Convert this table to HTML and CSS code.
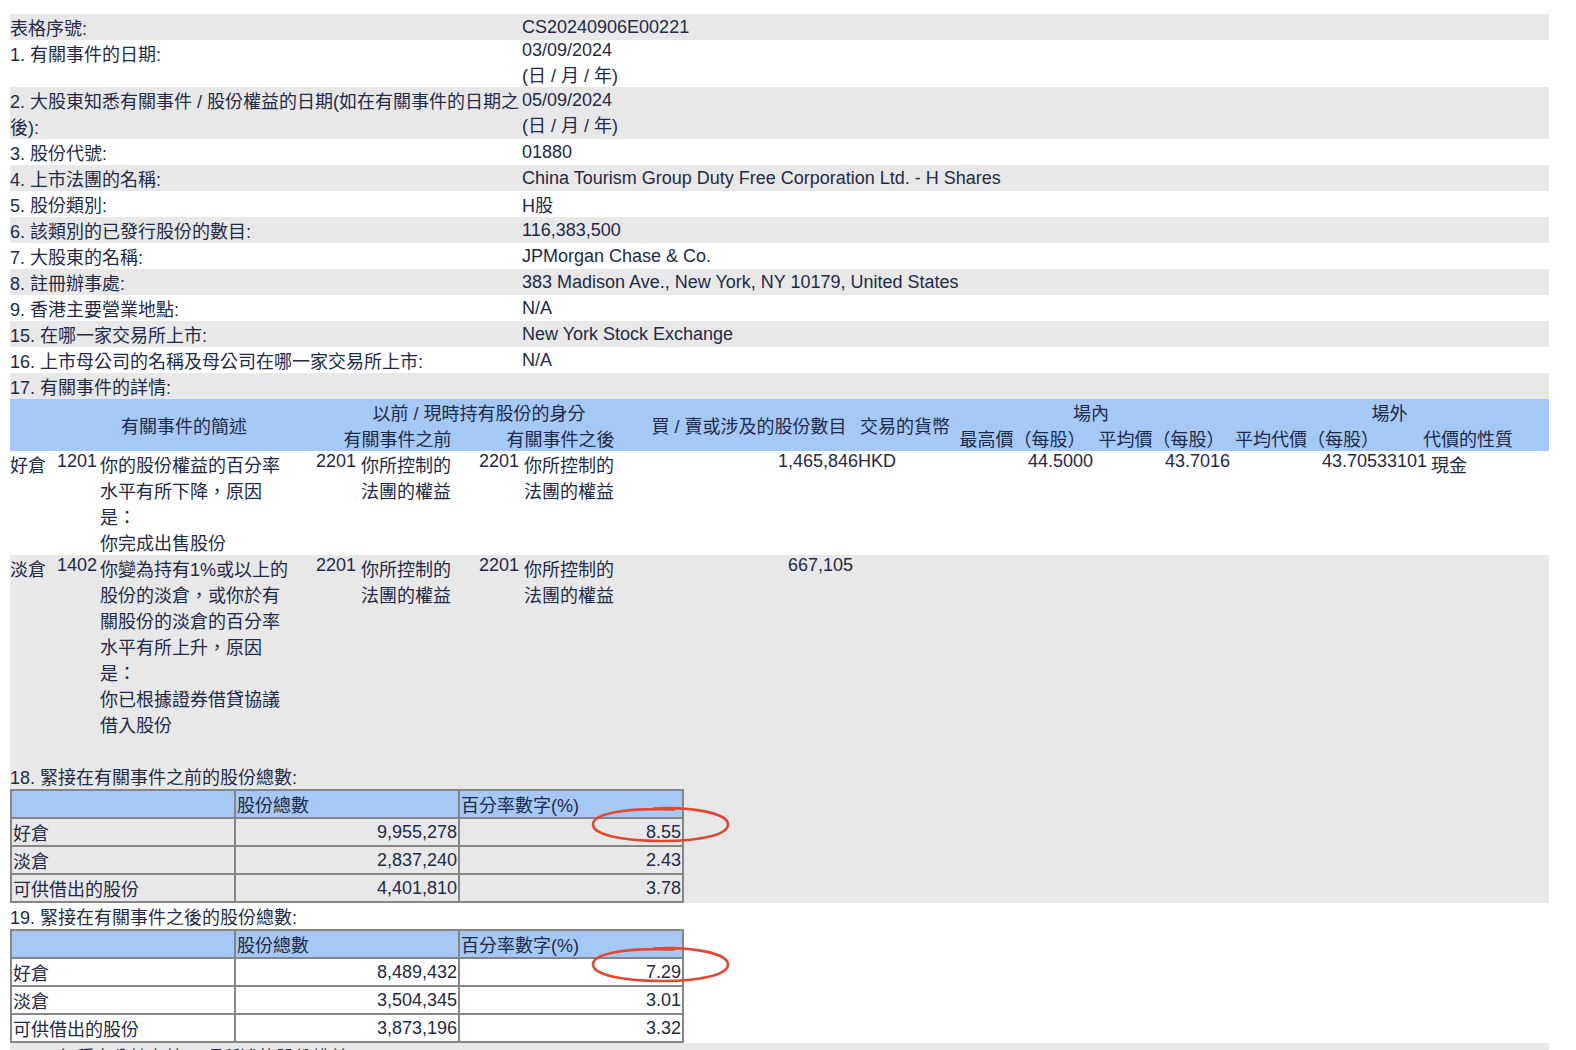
FILE: index.html
```html
<!DOCTYPE html>
<html lang="zh-Hant">
<head>
<meta charset="utf-8">
<title>權益披露</title>
<link rel="stylesheet" href="styles.css">
</head>
<body>
<div class="form">
  <div class="row gray"><div class="lbl">表格序號:</div><div class="val">CS20240906E00221</div></div>
  <div class="row"><div class="lbl">1. 有關事件的日期:</div><div class="val">03/09/2024<br>(日 / 月 / 年)</div></div>
  <div class="row gray"><div class="lbl nowrap">2. 大股東知悉有關事件 / 股份權益的日期(如在有關事件的日期之<br>後):</div><div class="val">05/09/2024<br>(日 / 月 / 年)</div></div>
  <div class="row"><div class="lbl">3. 股份代號:</div><div class="val">01880</div></div>
  <div class="row gray"><div class="lbl">4. 上市法團的名稱:</div><div class="val">China Tourism Group Duty Free Corporation Ltd. - H Shares</div></div>
  <div class="row"><div class="lbl">5. 股份類別:</div><div class="val">H股</div></div>
  <div class="row gray"><div class="lbl">6. 該類別的已發行股份的數目:</div><div class="val">116,383,500</div></div>
  <div class="row"><div class="lbl">7. 大股東的名稱:</div><div class="val">JPMorgan Chase &amp; Co.</div></div>
  <div class="row gray"><div class="lbl">8. 註冊辦事處:</div><div class="val">383 Madison Ave., New York, NY 10179, United States</div></div>
  <div class="row"><div class="lbl">9. 香港主要營業地點:</div><div class="val">N/A</div></div>
  <div class="row gray"><div class="lbl">15. 在哪一家交易所上市:</div><div class="val">New York Stock Exchange</div></div>
  <div class="row"><div class="lbl">16. 上市母公司的名稱及母公司在哪一家交易所上市:</div><div class="val">N/A</div></div>
  <div class="row gray"><div class="lbl">17. 有關事件的詳情:</div></div>

  <div class="dhead">
    <div class="h-desc">有關事件的簡述</div>
    <div class="h-cap">以前 / 現時持有股份的身分</div>
    <div class="h-before">有關事件之前</div>
    <div class="h-after">有關事件之後</div>
    <div class="h-shares">買 / 賣或涉及的股份數目</div>
    <div class="h-cur">交易的貨幣</div>
    <div class="h-on">場內</div>
    <div class="h-high">最高價（每股）</div>
    <div class="h-avg">平均價（每股）</div>
    <div class="h-off">場外</div>
    <div class="h-avgc">平均代價（每股）</div>
    <div class="h-nat">代價的性質</div>
  </div>

  <div class="drow">
    <div>好倉</div>
    <div class="c-code">1201</div>
    <div class="c-desc">你的股份權益的百分率<br>水平有所下降，原因<br>是：<br>你完成出售股份</div>
    <div class="c-code">2201</div>
    <div class="c-text">你所控制的<br>法團的權益</div>
    <div class="c-code">2201</div>
    <div class="c-text">你所控制的<br>法團的權益</div>
    <div class="c-num">1,465,846</div>
    <div>HKD</div>
    <div class="c-num">44.5000</div>
    <div class="c-num">43.7016</div>
    <div class="c-num">43.70533101</div>
    <div class="c-nat">現金</div>
  </div>

  <div class="drow gray tall">
    <div>淡倉</div>
    <div class="c-code">1402</div>
    <div class="c-desc">你變為持有1%或以上的<br>股份的淡倉，或你於有<br>關股份的淡倉的百分率<br>水平有所上升，原因<br>是：<br>你已根據證券借貸協議<br>借入股份</div>
    <div class="c-code">2201</div>
    <div class="c-text">你所控制的<br>法團的權益</div>
    <div class="c-code">2201</div>
    <div class="c-text">你所控制的<br>法團的權益</div>
    <div class="c-num c-short">667,105</div>
  </div>

  <div class="sec gray">
    <div class="sec-title">18. 緊接在有關事件之前的股份總數:</div>
    <table class="tot">
      <tr><th></th><th>股份總數</th><th>百分率數字(%)</th></tr>
      <tr><td>好倉</td><td class="num">9,955,278</td><td class="num circ">8.55<svg class="ring" viewBox="0 0 140 38" aria-hidden="true"><path d="M64 3.5 C104 1.5 138 8.5 138 19.5 C138 30.5 106 36.5 70 36 C32 35.5 2.5 30 3 19 C3.5 9 34 2.5 84 4.5"/></svg></td></tr>
      <tr><td>淡倉</td><td class="num">2,837,240</td><td class="num">2.43</td></tr>
      <tr><td>可供借出的股份</td><td class="num">4,401,810</td><td class="num">3.78</td></tr>
    </table>
  </div>

  <div class="sec">
    <div class="sec-title">19. 緊接在有關事件之後的股份總數:</div>
    <table class="tot">
      <tr><th></th><th>股份總數</th><th>百分率數字(%)</th></tr>
      <tr><td>好倉</td><td class="num">8,489,432</td><td class="num circ">7.29<svg class="ring" viewBox="0 0 140 38" aria-hidden="true"><path d="M64 3.5 C104 1.5 138 8.5 138 19.5 C138 30.5 106 36.5 70 36 C32 35.5 2.5 30 3 19 C3.5 9 34 2.5 84 4.5"/></svg></td></tr>
      <tr><td>淡倉</td><td class="num">3,504,345</td><td class="num">3.01</td></tr>
      <tr><td>可供借出的股份</td><td class="num">3,873,196</td><td class="num">3.32</td></tr>
    </table>
  </div>

  <div class="row gray"><div class="lbl nowrap">20. 以何種身分持有第19項所述的股份權益:</div></div>
</div>
</body>
</html>
```

FILE: styles.css
```css
* {
  box-sizing: border-box;
}

body {
  margin: 0;
  padding: 14px 0 0 10px;
  background: #ffffff;
  color: #1e2a48;
  font-family: "Liberation Sans", "Noto Sans CJK TC", sans-serif;
  font-size: 18px;
}

.form {
  width: 1539px;
}

.gray {
  background: #e8e8e8;
}

.row {
  display: flex;
  align-items: flex-start;
}

.lbl {
  flex: none;
  width: 512px;
}

.val {
  flex: 1;
  align-self: center;
}

.nowrap {
  white-space: nowrap;
}

/* ---- 17. detail table ---- */
.dhead,
.drow {
  display: grid;
  grid-template-columns: 45px 42px 216px 43px 120px 43px 121px 218px 94px 141px 137px 197px 122px;
  align-items: start;
}

.dhead {
  background: #a5c8f5;
  grid-template-rows: auto auto;
  text-align: center;
  white-space: nowrap;
}

.h-desc { grid-column: 2 / 4; grid-row: 1 / 3; align-self: center; }
.h-cap { grid-column: 4 / 8; grid-row: 1; padding-left: 5px; }
.h-before { grid-column: 4 / 6; grid-row: 2; padding-left: 6px; }
.h-after { grid-column: 6 / 8; grid-row: 2; padding-left: 5px; }
.h-shares { grid-column: 8; grid-row: 1 / 3; align-self: center; }
.h-cur { grid-column: 9; grid-row: 1 / 3; align-self: center; }
.h-on { grid-column: 10 / 12; grid-row: 1; }
.h-high { grid-column: 10; grid-row: 2; }
.h-avg { grid-column: 11; grid-row: 2; }
.h-off { grid-column: 12 / 14; grid-row: 1; }
.h-avgc { grid-column: 12; grid-row: 2; text-align: left; padding-left: 5px; }
.h-nat { grid-column: 13; grid-row: 2; text-align: left; margin-left: -4px; }

.c-code {
  text-align: right;
}

.c-desc {
  padding-left: 3px;
  white-space: nowrap;
}

.c-text {
  padding-left: 5px;
  white-space: nowrap;
}

.c-num {
  text-align: right;
}

.c-short {
  padding-right: 5px;
}

.c-nat {
  padding-left: 4px;
}

.tall {
  padding-bottom: 26px;
}

/* ---- 18 / 19 totals ---- */
.tot {
  width: 674px;
  table-layout: fixed;
  border-collapse: separate;
  border-spacing: 0;
  border: 1px solid #868686;
}

.tot th,
.tot td {
  border: 1px solid #868686;
  padding: 0 1px;
  font-weight: normal;
  text-align: left;
  white-space: nowrap;
}

.tot th {
  background: #a5c8f5;
}

.tot td.num {
  text-align: right;
}

.circ {
  position: relative;
}

.ring {
  position: absolute;
  left: 130px;
  top: -14px;
  width: 140px;
  height: 38px;
  overflow: visible;
  fill: none;
  stroke: #e4472f;
  stroke-width: 2.6;
  stroke-linecap: round;
}
```
